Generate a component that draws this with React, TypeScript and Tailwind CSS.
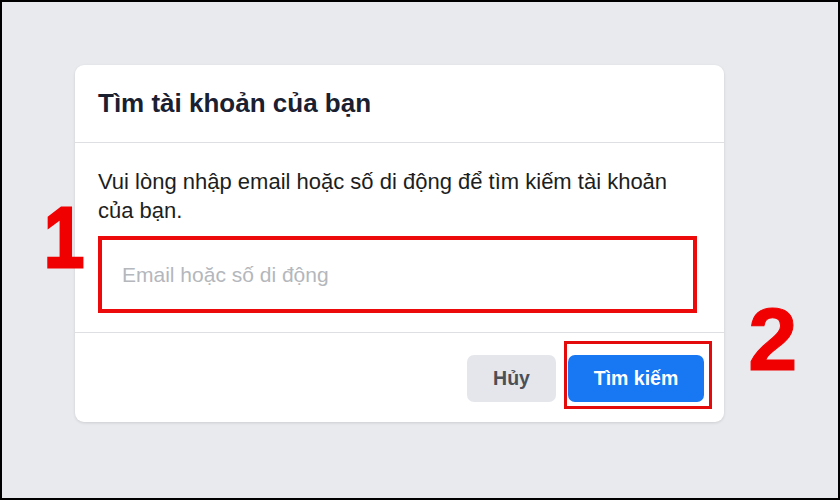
import React from 'react'

export default function App() {
	return (
		<div className="relative w-[840px] h-[500px] border-2 border-black bg-[#e9eaee] font-['Liberation_Sans',Arial,sans-serif] overflow-hidden">
			{/* Dialog */}
			<div className="ml-[73px] mt-[63px] w-[649px] h-[357px] bg-white rounded-[9px] shadow-[0_1px_3px_rgba(0,0,0,0.12)] flex flex-col">
				<div className="h-[78px] px-[23px] flex items-center border-b border-[#dddfe2]">
					<h1 className="text-[26px] font-bold text-[#1a2030]">Tìm tài khoản của bạn</h1>
				</div>
				<div className="px-[23px] pt-[24px] pb-[19px] border-b border-[#dddfe2]">
					<p className="text-[22px] leading-[29px] text-[#1c1e21] pr-[20px]">
						Vui lòng nhập email hoặc số di động để tìm kiếm tài khoản của bạn.
					</p>
					<div className="mt-[11px] h-[77px] w-[599px] border-[4px] border-[#ec0a0a] flex items-center px-[20px]">
						<input
							type="text"
							placeholder="Email hoặc số di động"
							className="w-full text-[21px] text-[#1c1e21] placeholder:text-[#b4b7bc] outline-none bg-transparent"
						/>
					</div>
				</div>
				<div className="flex-1 flex justify-end items-start gap-[12px] pt-[22px] pr-[20px]">
					<button className="w-[89px] h-[47px] rounded-[7px] bg-[#e4e6eb] text-[#4b4f56] text-[19.5px] font-bold">
						Hủy
					</button>
					<button className="w-[136px] h-[47px] rounded-[7px] bg-[#1877f2] text-white text-[19.5px] font-bold">
						Tìm kiếm
					</button>
				</div>
			</div>

			{/* Annotations */}
			<span className="absolute left-[42px] top-[193px] text-[85px] font-bold leading-none text-[#f00000] origin-left scale-x-[0.85] [-webkit-text-stroke:3px_#f00000]">1</span>
			<span className="absolute left-[746px] top-[293px] text-[89px] font-bold leading-none text-[#f00000] [-webkit-text-stroke:1px_#f00000]">2</span>
			<div className="absolute left-[562px] top-[339px] w-[148px] h-[68px] border-[3px] border-[#e30b0b]" />
		</div>
	)
}
